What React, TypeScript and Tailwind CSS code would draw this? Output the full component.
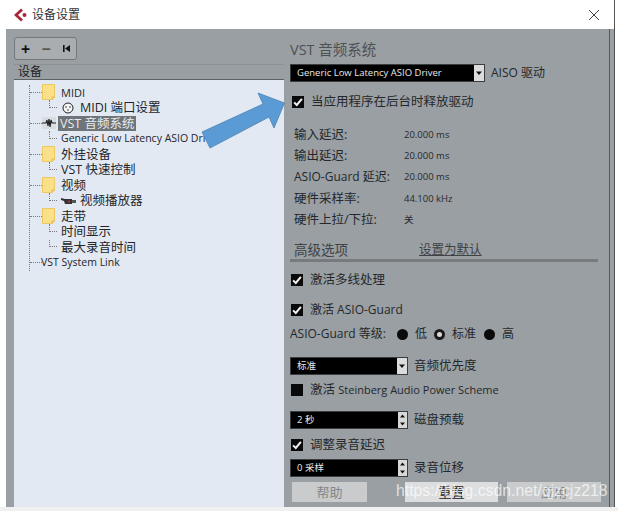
import { ReactNode } from "react";

const CJK = "font-['Open_Sans','Noto_Sans_CJK_SC',sans-serif]";

function Folder() {
  return (
    <svg width="13" height="16" viewBox="0 0 13 16" className="shrink-0">
      <path d="M0.5 0.5H12.5V13.5L10 15.5H0.5Z" fill="#fbe08a" stroke="#f0c860" />
      <path d="M10 15.5V13H12.5" fill="none" stroke="#e6b84e" />
    </svg>
  );
}

function Branch({ children }: { children: ReactNode }) {
  return (
    <div className="flex h-[15.5px] items-center">
      <div className="relative h-full w-[12px] shrink-0 ml-[19px]">
        <div className="absolute left-0 top-0 h-1/2 w-[8px] border-l border-b border-dotted border-[#77797c]" />
      </div>
      {children}
    </div>
  );
}

function Top({ children }: { children: ReactNode }) {
  return (
    <div className="flex h-[15.5px] items-center">
      <div className="w-[12px] shrink-0 border-b border-dotted border-[#77797c]" />
      {children}
    </div>
  );
}

function Check({ on = true }: { on?: boolean }) {
  return (
    <div className="flex h-[12px] w-[12px] shrink-0 items-center justify-center bg-[#0a0a0a]">
      {on && (
        <svg width="10" height="10" viewBox="0 0 9 9">
          <path d="M1 4.8L3.4 7.2L8 1.6" fill="none" stroke="#f2f2f2" strokeWidth="1.8" />
        </svg>
      )}
    </div>
  );
}

function CheckRow({ label, on, className }: { label: ReactNode; on?: boolean; className?: string }) {
  return (
    <div className={`flex h-[16px] items-center gap-[7px] pl-[1px] text-[12.5px] leading-[16px] text-[#24282b] ${className ?? ""}`}>
      <Check on={on} />
      <span className="whitespace-nowrap">{label}</span>
    </div>
  );
}

function Info({ label, value }: { label: ReactNode; value: string }) {
  return (
    <div className="flex h-[21.3px] items-center pl-[4px]">
      <span className="w-[110px] text-[12.5px] leading-[16px] text-[#24282b]">{label}</span>
      <span className="text-[9.5px] leading-[14px] text-[#26292c]">{value}</span>
    </div>
  );
}

function Field({ value, label, width, spin }: { value: string; label: ReactNode; width: string; spin?: boolean }) {
  return (
    <div className="flex h-[18px] items-center gap-[6px]">
      <div className={`flex h-[18px] items-center justify-between border border-[#3b3e40] bg-black pl-[6px] ${width}`}>
        <span className="text-[9.5px] leading-[14px] text-[#e8e8e8]">{value}</span>
        {spin ? (
          <div className="flex h-full w-[9px] flex-col justify-between bg-[#d8d8d8] text-[#111]">
            <svg width="9" height="8" viewBox="0 0 9 8"><path d="M2 5.5H7L4.5 2.5Z" fill="#111" /></svg>
            <svg width="9" height="8" viewBox="0 0 9 8"><path d="M2 2.5H7L4.5 5.5Z" fill="#111" /></svg>
          </div>
        ) : (
          <div className="flex h-full w-[10px] items-center justify-center bg-[#dcdcdc]">
            <svg width="8" height="6" viewBox="0 0 8 6"><path d="M1 1.5H7L4 5Z" fill="#111" /></svg>
          </div>
        )}
      </div>
      <span className="text-[12.5px] leading-[16px] text-[#24282b]">{label}</span>
    </div>
  );
}

function Radio({ on }: { on?: boolean }) {
  return on ? (
    <div className="h-[11px] w-[11px] rounded-full border-[3px] border-[#1a1a1a] bg-[#d9d9d9]" />
  ) : (
    <div className="h-[11px] w-[11px] rounded-full bg-[#0a0a0a]" />
  );
}

export default function App() {
  return (
    <div className={`relative flex h-[511px] w-[618px] flex-col overflow-hidden bg-white ${CJK}`}>
      {/* title bar */}
      <div className="flex h-[29px] shrink-0 items-center pl-[13px] pr-[14px] mr-[3px] border-r border-[#555]">
        <svg width="14" height="14" viewBox="0 0 14 14">
          <path d="M8 0.5L1 7L8 13.5L10 11.5L5 7L10 2.5Z" fill="#a82a3a" />
          <circle cx="11.5" cy="7" r="2" fill="#a82a3a" />
        </svg>
        <span className="ml-[5px] text-[12px] text-[#333]">设备设置</span>
        <svg className="ml-auto" width="12" height="12" viewBox="0 0 12 12">
          <path d="M1 1L11 11M11 1L1 11" stroke="#444" strokeWidth="1" />
        </svg>
      </div>

      {/* dialog body */}
      <div className="ml-[6px] mr-[3px] flex h-[478px] shrink-0 border-r border-[#4e5154] bg-[#9a9fa3] pr-[4px]">
        {/* left: device tree */}
        <div className="flex w-[278px] shrink-0 flex-col pl-[8px]">
          <div className="mt-[8px] flex h-[23px] w-[63px] items-center rounded-[3px] border border-[#74787b] bg-[#a9adb0]">
            <div className="flex h-full w-[21px] items-center justify-center text-[16px] font-bold leading-none text-[#111]">+</div>
            <div className="flex h-full w-[20px] items-center justify-center text-[16px] font-bold leading-none text-[#555]">−</div>
            <div className="flex h-full flex-1 items-center justify-center">
              <svg width="9" height="9" viewBox="0 0 9 9"><path d="M1 1H2.6V8H1ZM8 1V8L3 4.5Z" fill="#111" /></svg>
            </div>
          </div>
          <div className="mt-[4px] h-[15px] border-t border-[#8d9194] pl-[4px] text-[12px] leading-[14px] text-[#1e2124]">设备</div>
          <div className="flex-1 border-t border-[#5d6164] bg-[#e3e9f2] pt-[4.5px] text-[12.5px] leading-[15px] text-[#22252a]">
            <div className="ml-[15px] w-fit border-l border-dotted border-[#77797c]">
              <Top><Folder /><span className="ml-[6px] text-[11px]">MIDI</span></Top>
              <Branch>
                <svg width="12" height="12" viewBox="0 0 12 12" className="ml-[1px]"><circle cx="6" cy="6" r="5" fill="#f4f4f4" stroke="#222" /><circle cx="4" cy="5" r=".7" /><circle cx="8" cy="5" r=".7" /><circle cx="6" cy="8" r=".7" /></svg>
                <span className="ml-[6px] whitespace-nowrap">MIDI 端口设置</span>
              </Branch>
              <Top>
                <svg width="14" height="12" viewBox="0 0 14 12" className="shrink-0"><rect width="14" height="12" fill="#d8dde2" /><path d="M0 6H4L5 3L6 9L7 2L8 10L9 3L10 6H14" fill="none" stroke="#222" strokeWidth="1.2" /></svg>
                <span className="ml-[2px] bg-[#6f7479] px-[2px] whitespace-nowrap text-[#e9ebee]">VST 音频系统</span>
              </Top>
              <Branch><span className="whitespace-nowrap text-[10.5px]">Generic Low Latency ASIO Dri</span></Branch>
              <Top><Folder /><span className="ml-[6px]">外挂设备</span></Top>
              <Branch><span className="whitespace-nowrap">VST 快速控制</span></Branch>
              <Top><Folder /><span className="ml-[6px]">视频</span></Top>
              <Branch>
                <svg width="15" height="8" viewBox="0 0 15 8" className="shrink-0"><path d="M0 1L4 2H11V7H4L3 4L0 3Z" fill="#333" /><rect x="11" y="3" width="4" height="3" fill="#555" /><circle cx="8" cy="4.5" r="1" fill="#c33" /></svg>
                <span className="ml-[4px] whitespace-nowrap">视频播放器</span>
              </Branch>
              <Top><Folder /><span className="ml-[6px]">走带</span></Top>
              <Branch><span className="whitespace-nowrap">时间显示</span></Branch>
              <Branch><span className="whitespace-nowrap">最大录音时间</span></Branch>
              <Top><span className="-ml-px whitespace-nowrap text-[10.5px]">VST System Link</span></Top>
            </div>
          </div>
        </div>

        {/* right: settings */}
        <div className="flex min-w-0 flex-1 flex-col border-r border-[#55595c] pl-[6px] pr-[7px]">
          <div className="mt-[12px] h-[18px] text-[14.5px] leading-[18px] text-[#4c5155]">VST 音频系统</div>
          <div className="mt-[5px]"><Field value="Generic Low Latency ASIO Driver" label={<span className="text-[12px]">AISO 驱动</span>} width="w-[195px]" /></div>
          <CheckRow label="当应用程序在后台时释放驱动" className="mt-[12px] !pl-[2px]" />
          <div className="mt-[14px]">
            <Info label="输入延迟:" value="20.000 ms" />
            <Info label="输出延迟:" value="20.000 ms" />
            <Info label={<span className="text-[12px]">ASIO-Guard 延迟:</span>} value="20.000 ms" />
            <Info label="硬件采样率:" value="44.100 kHz" />
            <Info label="硬件上拉/下拉:" value="关" />
          </div>
          <div className="mt-[12px] flex h-[16px] items-center pl-[4px] leading-[16px] text-[#3e4245]">
            <span className="w-[125px] text-[13.5px]">高级选项</span>
            <span className="text-[12.5px] underline">设置为默认</span>
          </div>
          <div className="mt-[1px] h-[3px] w-[308px] shrink-0 bg-[#777b7e]" />
          <CheckRow label="激活多线处理" className="mt-[10px]" />
          <CheckRow label={<span className="text-[12px]">激活 ASIO-Guard</span>} className="mt-[14px]" />
          <div className="mt-[8px] flex h-[16px] items-center text-[12px] leading-[16px] text-[#24282b]">
            <span className="w-[107px] whitespace-nowrap">ASIO-Guard 等级:</span>
            <Radio /><span className="ml-[7px] w-[19px]">低</span>
            <Radio on /><span className="ml-[7px] w-[32px]">标准</span>
            <Radio /><span className="ml-[7px]">高</span>
          </div>
          <div className="mt-[15px]"><Field value="标准" label="音频优先度" width="w-[118px]" /></div>
          <CheckRow on={false} label={<>激活 <span className="text-[11px]">Steinberg Audio Power Scheme</span></>} className="mt-[7px]" />
          <div className="mt-[13px]"><Field value="2 秒" label="磁盘预载" width="w-[118px]" spin /></div>
          <CheckRow label="调整录音延迟" className="mt-[8px]" />
          <div className="mt-[6px]"><Field value="0 采样" label="录音位移" width="w-[118px]" spin /></div>
          <div className="mt-[5px] flex h-[20px] text-[13px] leading-[16px]">
            <div className="ml-[2px] flex w-[75px] items-center justify-center bg-[#c9cbcc] text-[#83878a]">帮助</div>
            <div className="ml-[38px] flex w-[93px] items-center justify-center bg-[#dddedf] text-[#17191b]">重置</div>
            <div className="ml-[9px] flex w-[94px] items-center justify-center bg-[#c9cbcc] text-[#83878a]">应用</div>
          </div>
        </div>
      </div>

      <div className="flex-1 bg-[#f0f0f0]" />

      {/* arrow overlay */}
      <svg className="absolute left-[198px] top-[88px]" width="94" height="64" viewBox="198 88 94 64">
        <path d="M202 132L263 104L258 93L284.5 103L274 128L269 117L210 148Z" fill="#5b9bd5" stroke="#4a82b5" strokeWidth="0.8" />
      </svg>

      {/* watermark */}
      <div className="absolute left-[396px] top-[481px] font-['Liberation_Sans',sans-serif] text-[15.8px] leading-[20px] whitespace-nowrap text-white/70">
        https://blog.csdn.net/qjzcjz218
      </div>
    </div>
  );
}
